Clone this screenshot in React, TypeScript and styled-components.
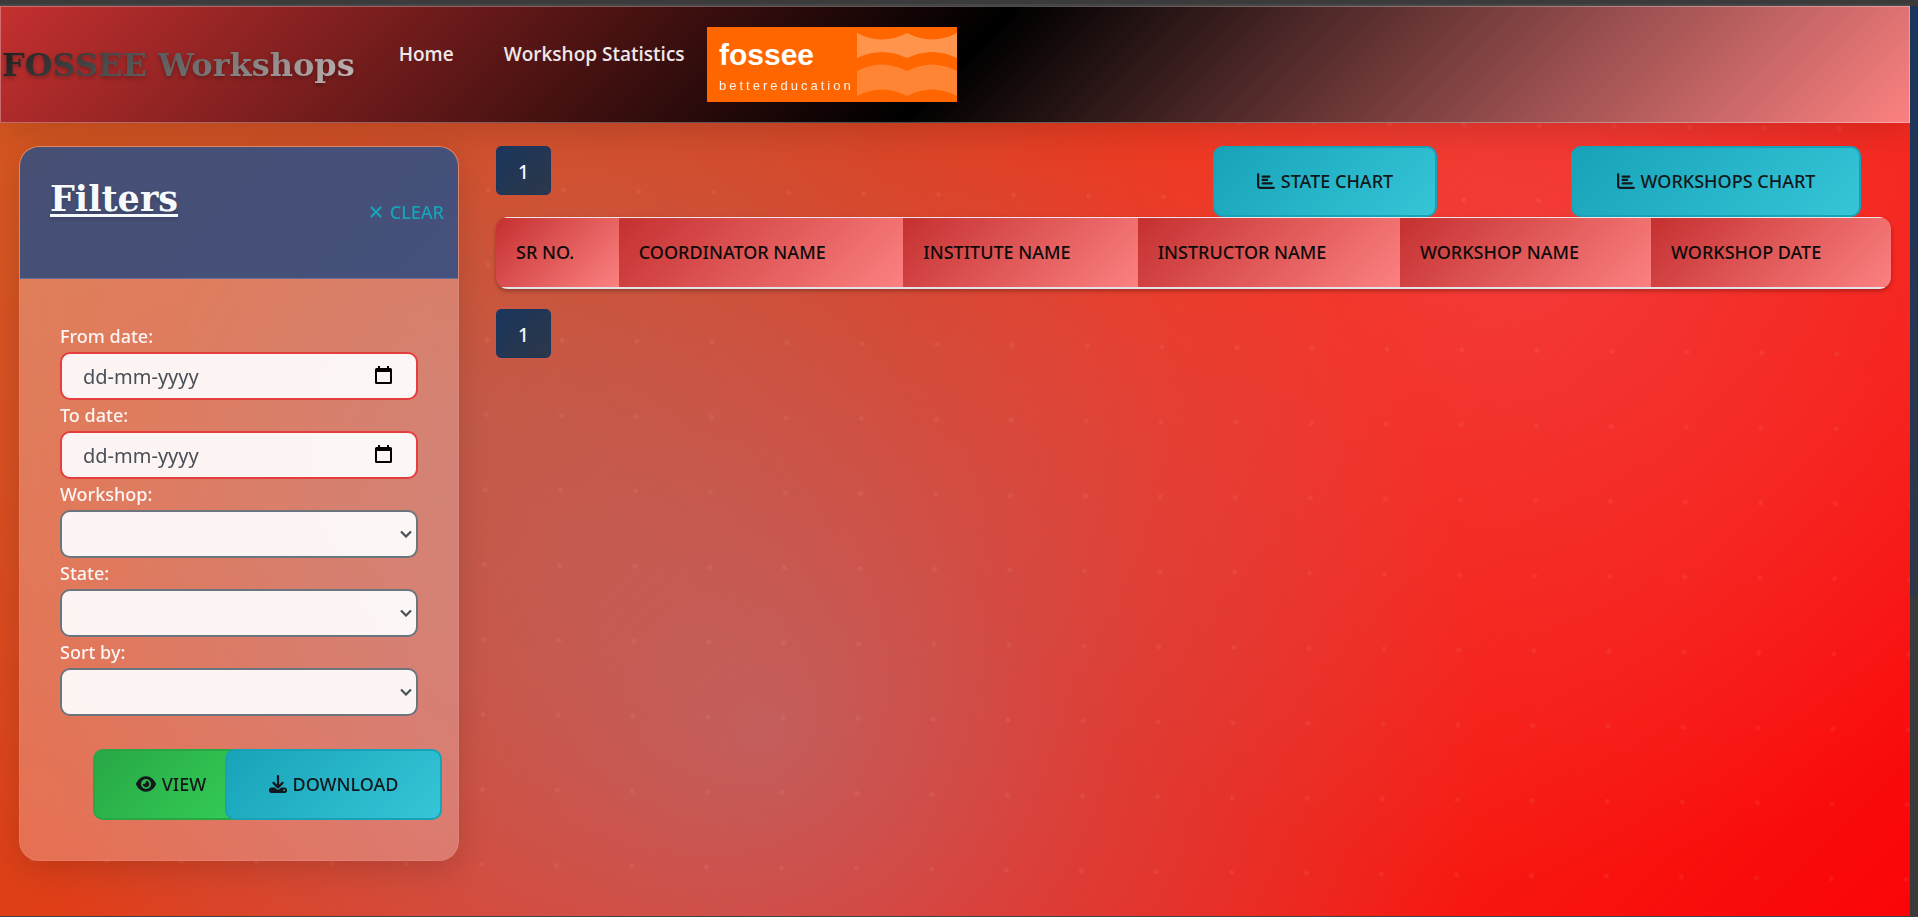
import React from "react";
import styled, { createGlobalStyle, css } from "styled-components";
import { FaChartBar, FaDownload, FaEye, FaXmark } from "react-icons/fa6";

const sans = '"Noto Sans", "Open Sans", sans-serif';
const serif = '"DejaVu Serif", "Liberation Serif", serif';

const GlobalStyle = createGlobalStyle`
  *, *::before, *::after { box-sizing: border-box; }
  body {
    margin: 0;
    background: #3b3b3b;
    color: #f7fafc;
    font-family: ${sans};
    font-size: 18px;
  }
`;

const Shell = styled.div`
  display: flex;
  min-height: 100vh;
  border-top: 4px solid #3b3b3b;
  border-bottom: 1px solid #3f4347;
`;

const Page = styled.div`
  position: relative;
  flex: 1;
  min-width: 0;
  overflow: hidden;
  border-top: 2px solid #464646;
  background:
    radial-gradient(circle at 40% 80%, rgba(135, 160, 190, 0.38) 0, transparent 720px),
    radial-gradient(circle at 24% 46%, rgba(150, 130, 160, 0.22) 0, transparent 720px),
    radial-gradient(circle at 80% 26%, rgba(245, 100, 130, 0.32) 0, transparent 640px),
    linear-gradient(135deg, #d9581a 0%, #e03e14 32%, #ee3014 50%, #f22614 64%, #f61c12 80%, #fb0408 100%);
`;

const Dots = styled.div`
  position: absolute;
  inset: 0 -20px 0 0;
  background: radial-gradient(circle, rgba(255, 255, 255, 0.06) 2px, transparent 3px) 3px -9px / 75px 75px;
  transform: rotate(0.6deg);
  transform-origin: 0 0;
`;

const ScrollTrack = styled.div`
  width: 8px;
  padding-top: 2px;
  background: #3a3a3c;
`;

const ScrollThumb = styled.div`
  height: 65%;
  border-radius: 0 0 4px 4px;
  background: linear-gradient(135deg, #1a365d, #2d3748);
`;

const Header = styled.header`
  position: relative;
  display: flex;
  align-items: flex-start;
  height: 117px;
  border: 1px solid rgba(255, 255, 255, 0.3);
  background: linear-gradient(135deg, #c53030 0%, #000 50%, #fc8181 100%);
  background-origin: border-box;
  box-shadow: 0 8px 32px rgba(0, 0, 0, 0.14);
`;

const Brand = styled.a`
  margin: 36px 44px 0 1px;
  font: 700 32px/44px ${serif};
  text-decoration: none;
  color: transparent;
  background: linear-gradient(135deg, #1c1c1c, #666 50%, #c4b8b8);
  background-clip: text;
  filter: drop-shadow(0 2px 2px rgba(0, 0, 0, 0.3));
  white-space: nowrap;
`;

const Nav = styled.nav`
  display: flex;
  gap: 50px;
  margin: 33px 22px 0 0;
`;

const NavLink = styled.a`
  font: 600 19px/28px "Open Sans", sans-serif;
  color: #efe8e8;
  text-decoration: none;
  white-space: nowrap;
`;

const Logo = styled.svg`
  display: block;
  flex: none;
  width: 250px;
  height: 75px;
  margin-top: 20px;
`;

const Main = styled.main`
  position: relative;
  display: flex;
  align-items: flex-start;
  gap: 37px;
  padding: 23px 19px 55px;
`;

const FilterCard = styled.form`
  flex: none;
  width: 440px;
  overflow: hidden;
  border: 1px solid rgba(255, 255, 255, 0.3);
  border-radius: 20px;
  background: rgba(255, 255, 255, 0.25);
  background-clip: padding-box;
  backdrop-filter: blur(20px);
  box-shadow: 0 8px 32px rgba(0, 0, 0, 0.15);
`;

const FilterHeader = styled.div`
  display: flex;
  justify-content: space-between;
  height: 132px;
  padding: 28px 14px 0 30px;
  border-bottom: 1px solid #66709a;
  background: linear-gradient(135deg, #474f73, #45517c);
`;

const FilterTitle = styled.h2`
  margin: 0;
  font: 700 35px/48px ${serif};
  color: #f7fafc;
  text-decoration: underline;
  text-decoration-thickness: 3px;
  text-underline-offset: 3px;
  text-decoration-skip-ink: none;
  text-shadow: 0 2px 4px rgba(0, 0, 0, 0.2);
`;

const ClearLink = styled.a`
  display: flex;
  align-items: center;
  align-self: flex-start;
  gap: 5px;
  margin-top: 24px;
  font-weight: 500;
  line-height: 26px;
  color: #17a2b8;
  text-decoration: none;
`;

const Fields = styled.div`
  padding: 42px 40px 0;
`;

const Field = styled.div`
  position: relative;
  display: flex;
  flex-direction: column;
`;

const Label = styled.label`
  height: 31px;
  font-weight: 500;
  line-height: 30px;
  color: #fbf5f5;
`;

const control = css<{ $line: string }>`
  width: 100%;
  height: 48px;
  padding: 0 21px;
  border: 2px solid ${(p) => p.$line};
  border-radius: 10px;
  background: rgba(255, 255, 255, 0.93);
  font: 400 20px/28px ${sans};
  color: #495057;
`;

const DateInput = styled.input`
  ${control}
  &::placeholder { color: #495057; opacity: 1; }
`;

const Select = styled.select`
  ${control}
  appearance: none;
`;

const Calendar = styled.svg`
  position: absolute;
  right: 26px;
  bottom: 16px;
  width: 17px;
  height: 18px;
`;

const Chevron = styled.svg`
  position: absolute;
  right: 6px;
  bottom: 20px;
  width: 12px;
  height: 8px;
  pointer-events: none;
`;

const tones = {
  green: { line: "#28a745", fill: "linear-gradient(135deg, #28a745, #34ce57)" },
  teal: { line: "#17a2b8", fill: "linear-gradient(135deg, #17a2b8, #36c6d8)" },
};

const Button = styled.button<{ $tone: keyof typeof tones; $width: number }>`
  position: relative;
  display: flex;
  align-items: center;
  justify-content: center;
  gap: 6px;
  width: ${(p) => p.$width}px;
  height: 71px;
  padding: 0 0 2px;
  border: 2px solid ${(p) => tones[p.$tone].line};
  border-radius: 10px;
  background: ${(p) => tones[p.$tone].fill};
  background-origin: border-box;
  font: 500 18px/26px ${sans};
  color: #12181b;
  white-space: nowrap;
`;

const Actions = styled.div`
  display: flex;
  justify-content: flex-end;
  padding: 33px 16px 40px 0;
  & > ${Button} + ${Button} { margin-left: -24px; }
`;

const Content = styled.section`
  flex: 1;
  min-width: 0;
`;

const Toolbar = styled.div`
  display: flex;
  align-items: flex-start;
  justify-content: space-between;
`;

const ChartButtons = styled.div`
  display: flex;
  gap: 134px;
  padding-right: 30px;
`;

const PageLink = styled.a`
  display: flex;
  align-items: center;
  justify-content: center;
  width: 55px;
  height: 49px;
  padding-top: 2px;
  border: 1px solid #1a365d;
  border-radius: 5px;
  background: linear-gradient(135deg, #1a365d, #2d3748);
  font: 500 19px/26px ${sans};
  color: #f7fafc;
  text-decoration: none;
`;

const TableFrame = styled.div`
  margin-bottom: 20px;
  overflow: hidden;
  border-radius: 12px;
  box-shadow: 0 2px 4px rgba(0, 0, 0, 0.3);
`;

const Table = styled.table`
  width: 100%;
  table-layout: fixed;
  border-collapse: separate;
  border-spacing: 0;
`;

const HeadCell = styled.th<{ $share: number }>`
  width: ${(p) => p.$share}%;
  height: 72px;
  padding: 0 0 2px 20px;
  border-top: 1px solid #f0e4e6;
  border-bottom: 2px solid #e2e2e8;
  background: linear-gradient(135deg, #c53030, #fc8181);
  font: 500 18px/26px ${sans};
  text-align: left;
  color: #0e0a0a;
  white-space: nowrap;
`;

const columns = [
  { title: "SR NO.", share: 8.8 },
  { title: "COORDINATOR NAME", share: 20.4 },
  { title: "INSTITUTE NAME", share: 16.8 },
  { title: "INSTRUCTOR NAME", share: 18.8 },
  { title: "WORKSHOP NAME", share: 18 },
  { title: "WORKSHOP DATE", share: 17.2 },
];

const CalendarIcon = () => (
  <Calendar viewBox="0 0 17 18" aria-hidden="true">
    <path d="M3 0h2v2h7V0h2v2h1.500a1.500 1.500 0 0 1 1.500 1.500v13a1.500 1.500 0 0 1-1.500 1.500h-14A1.500 1.500 0 0 1 0 16.500v-13A1.500 1.500 0 0 1 1.500 2H3zM2 6v10h13V6z" fill="#000" fillRule="evenodd" />
  </Calendar>
);

const ChevronIcon = () => (
  <Chevron viewBox="0 0 12 8" aria-hidden="true">
    <path d="M1 1.500L6 6.500L11 1.500" fill="none" stroke="#495057" strokeWidth="2.200" />
  </Chevron>
);

const FosseeLogo = () => (
  <Logo viewBox="0 0 250 75" role="img" aria-label="fossee bettereducation">
    <rect width="250" height="75" fill="#ff6600" />
    <path d="M150 6Q175 19 200 6Q225 19 250 6V31Q225 19 200 31Q175 19 150 31Z" fill="#fff" opacity="0.3" />
    <path d="M150 44Q175 31 200 44Q225 31 250 44V69Q225 56 200 69Q175 56 150 69Z" fill="#fff" opacity="0.2" />
    <text x="12" y="38" fontFamily="Liberation Sans, Arial, sans-serif" fontWeight="700" fontSize="30" fill="#fff">fossee</text>
    <text x="12" y="63" fontFamily="Liberation Sans, Arial, sans-serif" fontSize="13" letterSpacing="3" fill="#fff" opacity="0.9">bettereducation</text>
  </Logo>
);

export default function App() {
  return (
    <>
      <GlobalStyle />
      <Shell>
        <Page>
          <Dots />
          <Header>
            <Brand href="#">FOSSEE Workshops</Brand>
            <Nav>
              <NavLink href="#home">Home</NavLink>
              <NavLink href="#statistics">Workshop Statistics</NavLink>
            </Nav>
            <FosseeLogo />
          </Header>
          <Main>
            <FilterCard>
              <FilterHeader>
                <FilterTitle>Filters</FilterTitle>
                <ClearLink href="#clear"><FaXmark />CLEAR</ClearLink>
              </FilterHeader>
              <Fields>
                <Field>
                  <Label htmlFor="from-date">From date:</Label>
                  <DateInput id="from-date" type="text" placeholder="dd-mm-yyyy" $line="#e53e3e" />
                  <CalendarIcon />
                </Field>
                <Field>
                  <Label htmlFor="to-date">To date:</Label>
                  <DateInput id="to-date" type="text" placeholder="dd-mm-yyyy" $line="#e53e3e" />
                  <CalendarIcon />
                </Field>
                {["Workshop", "State", "Sort by"].map((name) => (
                  <Field key={name}>
                    <Label htmlFor={name}>{name}:</Label>
                    <Select id={name} $line="#6c757d" />
                    <ChevronIcon />
                  </Field>
                ))}
              </Fields>
              <Actions>
                <Button type="button" $tone="green" $width={156}><FaEye size={20} />VIEW</Button>
                <Button type="button" $tone="teal" $width={217}><FaDownload size={18} />DOWNLOAD</Button>
              </Actions>
            </FilterCard>
            <Content>
              <Toolbar>
                <PageLink href="#page-1">1</PageLink>
                <ChartButtons>
                  <Button type="button" $tone="teal" $width={224}><FaChartBar size={18} />STATE CHART</Button>
                  <Button type="button" $tone="teal" $width={290}><FaChartBar size={18} />WORKSHOPS CHART</Button>
                </ChartButtons>
              </Toolbar>
              <TableFrame>
                <Table>
                  <thead>
                    <tr>
                      {columns.map((c) => (
                        <HeadCell key={c.title} scope="col" $share={c.share}>{c.title}</HeadCell>
                      ))}
                    </tr>
                  </thead>
                </Table>
              </TableFrame>
              <PageLink href="#page-1">1</PageLink>
            </Content>
          </Main>
        </Page>
        <ScrollTrack><ScrollThumb /></ScrollTrack>
      </Shell>
    </>
  );
}
